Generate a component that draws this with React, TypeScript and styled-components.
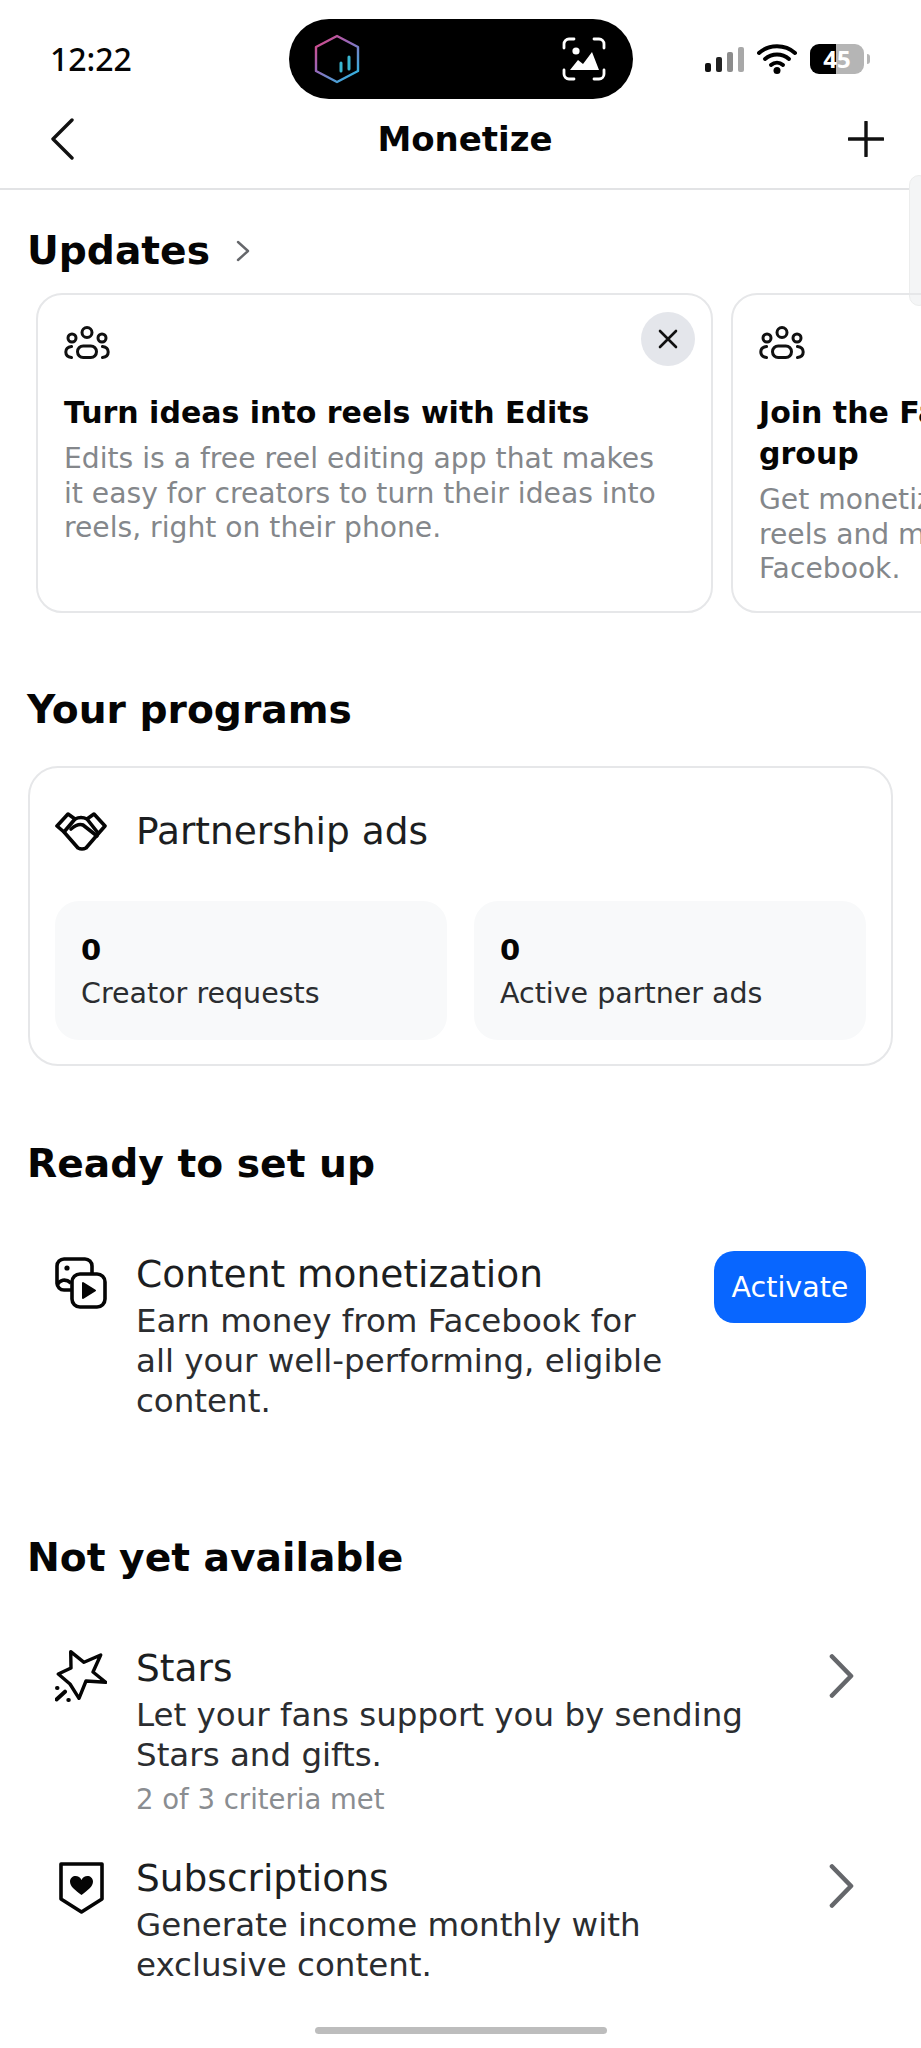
import React from "react";
import styled, { createGlobalStyle } from "styled-components";

const Global = createGlobalStyle`
  html, body { margin: 0; padding: 0; background: #fff; }
  * { box-sizing: border-box; }
`;

const Page = styled.div`
  position: relative;
  width: 921px;
  height: 2048px;
  overflow: hidden;
  background: #fff;
  color: #050505;
  font-family: "DejaVu Sans", "Noto Sans", sans-serif;
`;

const StatusBar = styled.div`
  height: 104px;
  padding: 19px 50px 0 50px;
  display: flex;
  align-items: flex-start;
  justify-content: space-between;
`;

const Time = styled.div`
  width: 239px;
  height: 80px;
  line-height: 80px;
  font-family: "Noto Sans", sans-serif;
  font-size: 32px;
  font-weight: 500;
`;

const Island = styled.div`
  width: 344px;
  height: 80px;
  border-radius: 40px;
  background: #000;
  padding: 0 27px 0 25px;
  display: flex;
  align-items: center;
  justify-content: space-between;
`;

const StatusIcons = styled.div`
  flex: 1;
  height: 80px;
  margin-right: -21px;
  padding-left: 72px;
  display: flex;
  align-items: center;
  gap: 13px;
`;

const Battery = styled.div`
  position: relative;
  width: 54px;
  height: 30px;
  border-radius: 9px;
  background: linear-gradient(90deg, #000 0 26px, #b5b5b5 26px);
  color: #fff;
  font-family: "Noto Sans", sans-serif;
  font-size: 24px;
  font-weight: 700;
  line-height: 30px;
  text-align: center;
  &::after {
    content: "";
    position: absolute;
    right: -6px;
    top: 10px;
    width: 3px;
    height: 10px;
    border-radius: 0 3px 3px 0;
    background: #b5b5b5;
  }
`;

const Nav = styled.div`
  height: 86px;
  padding: 0 37px 14px 50px;
  display: flex;
  align-items: center;
  justify-content: space-between;
  border-bottom: 2px solid #e2e3e5;
`;

const NavTitle = styled.div`
  margin-left: 8px;
  font-size: 34px;
  font-weight: 700;
  line-height: 50px;
`;

const SideSheetHint = styled.div`
  position: absolute;
  top: 175px;
  right: -8px;
  width: 20px;
  height: 131px;
  border-radius: 10px;
  background: #f4f5f6;
  border: 1px solid #eceded;
`;

const SectionHead = styled.div<{ $top: number }>`
  margin-top: ${(p) => p.$top}px;
  padding-left: 27px;
  display: flex;
  align-items: center;
  gap: 26px;
  height: 50px;
`;

const Heading = styled.h2`
  margin: 0;
  font-size: 39.200px;
  font-weight: 700;
  line-height: 50px;
`;

const Strip = styled.div`
  margin-top: 17px;
  padding-left: 36px;
  display: flex;
  gap: 18px;
  overflow: hidden;
`;

const UpdateCard = styled.div`
  position: relative;
  flex: 0 0 677px;
  height: 320px;
  padding: 31px 26px 0 26px;
  border: 2px solid #e6e7e9;
  border-radius: 26px;
`;

const CloseButton = styled.div`
  position: absolute;
  top: 17px;
  right: 16px;
  width: 54px;
  height: 54px;
  border-radius: 50%;
  background: #e4e6eb;
  display: flex;
  align-items: center;
  justify-content: center;
`;

const UpdateTitle = styled.div`
  margin-top: 33px;
  font-size: 30px;
  font-weight: 700;
  line-height: 41px;
  white-space: nowrap;
`;

const UpdateDesc = styled.div`
  margin-top: 9px;
  font-size: 28.200px;
  line-height: 34.500px;
  color: #84878b;
  white-space: nowrap;
`;

const ProgramCard = styled.div`
  margin: 31px 28px 0 28px;
  height: 300px;
  padding: 40px 25px 0 25px;
  border: 2px solid #e6e7e9;
  border-radius: 30px;
`;

const ProgramHead = styled.div`
  display: flex;
  align-items: center;
  gap: 29px;
  height: 46px;
`;

const ProgramName = styled.div`
  font-size: 37.500px;
  line-height: 46px;
  color: #1c1e21;
`;

const Stats = styled.div`
  margin-top: 47px;
  display: grid;
  grid-template-columns: 392px 392px;
  gap: 27px;
`;

const Stat = styled.div`
  height: 139px;
  padding: 29px 26px 0 26px;
  border-radius: 24px;
  background: #f8f9fa;
`;

const StatValue = styled.div`
  font-size: 29px;
  font-weight: 700;
  line-height: 40px;
`;

const StatLabel = styled.div`
  margin-top: 4px;
  font-size: 28.500px;
  line-height: 40px;
  color: #2b2d30;
`;

const Row = styled.div<{ $top: number }>`
  margin-top: ${(p) => p.$top}px;
  padding: 0 55px 0 55px;
  display: flex;
  align-items: flex-start;
`;

const IconCell = styled.div<{ $pad: number }>`
  flex: 0 0 81px;
  padding-top: ${(p) => p.$pad}px;
`;

const RowBody = styled.div`
  flex: 1;
`;

const RowTitle = styled.div`
  font-size: 37.500px;
  line-height: 46px;
  color: #1c1e21;
`;

const RowDesc = styled.div`
  margin-top: 4px;
  font-size: 32.500px;
  line-height: 40px;
  color: #2b2d30;
  white-space: nowrap;
`;

const RowNote = styled.div`
  margin-top: 5px;
  font-size: 27.500px;
  line-height: 38px;
  color: #8a8d91;
`;

const ActivateButton = styled.div`
  width: 152px;
  height: 72px;
  border-radius: 20px;
  background: #0866ff;
  color: #fff;
  font-size: 28.500px;
  display: flex;
  align-items: center;
  justify-content: center;
`;

const RowChevron = styled.div`
  padding: 9px 12px 0 0;
`;

const HomeIndicator = styled.div`
  position: absolute;
  left: 315px;
  top: 2027px;
  width: 292px;
  height: 7px;
  border-radius: 4px;
  background: #bdbdbd;
`;

const IconSvg = styled.svg<{ $indent?: number }>`
  display: block;
  margin-left: ${(p) => p.$indent ?? 0}px;
`;

const People = () => (
  <IconSvg width="46" height="33" viewBox="0 0 46 33" fill="none" stroke="#111" strokeWidth="3" strokeLinecap="round">
    <circle cx="23" cy="6.500" r="5" />
    <circle cx="8" cy="12" r="4" />
    <circle cx="38" cy="12" r="4" />
    <rect x="13.500" y="20" width="19" height="11.500" rx="5.700" />
    <path d="M7.500 20.500C3.500 21 1.800 23.500 1.800 26C1.800 28.500 3.500 31 7.500 31.500M38.500 20.500C42.500 21 44.200 23.500 44.200 26C44.200 28.500 42.500 31 38.500 31.500" />
  </IconSvg>
);

const Handshake = () => (
  <IconSvg width="52" height="40" viewBox="0 0 52 40" fill="none" stroke="#050505" strokeWidth="3.600" strokeLinejoin="round" strokeLinecap="round">
    <path d="M2 15L13 3L20 8Q26 5 32 8L39 3L50 15L43 23L31 37Q27 39 23 37L9 21Z" />
    <path d="M9 21L20 8M32 8L43 22" />
    <path d="M16 18Q23 12 28 14L42 25" />
  </IconSvg>
);

const MediaPlay = () => (
  <IconSvg width="52" height="52" viewBox="0 0 52 52" fill="none" stroke="#050505" strokeWidth="3.600" strokeLinejoin="round">
    <path d="M16 33H9a7 7 0 0 1-7-7V9a7 7 0 0 1 7-7h21a7 7 0 0 1 7 7v7" />
    <circle cx="12" cy="11" r="2.600" fill="#050505" stroke="none" />
    <path d="M2 28c3-5 8-7 14-2" />
    <rect x="17" y="17" width="33" height="33" rx="8" />
    <path d="M28 26v15l12-7.500z" fill="#050505" stroke="#050505" strokeWidth="2" />
  </IconSvg>
);

const StarIcon = () => (
  <IconSvg width="52" height="54" viewBox="0 0 52 54" fill="none" stroke="#050505" strokeWidth="3.400" strokeLinejoin="round" strokeLinecap="round">
    <path d="M15.700 2.700L29 13.300L45.700 6L38 23L50.700 33.300L31 32L24 49.300L15 35L3.300 25L16 19Z" />
    <path d="M2 39L2.500 39M10 42.700L1.500 50.500M13.300 51L13.800 51" strokeWidth="4" />
  </IconSvg>
);

const Shield = () => (
  <IconSvg $indent={4} width="45" height="52" viewBox="0 0 45 52" fill="none" stroke="#050505" strokeWidth="3.600" strokeLinejoin="round">
    <path d="M2 2H43V37L22.500 50L2 37Z" />
    <path d="M22.500 33C16 28 11 24.500 11 19.500C11 16 14 14 16.500 14C19 14 21.500 15.500 22.500 18C23.500 15.500 26 14 28.500 14C31 14 34 16 34 19.500C34 24.500 29 28 22.500 33Z" fill="#050505" stroke="none" />
  </IconSvg>
);

const Chevron = () => (
  <IconSvg width="25" height="44" viewBox="0 0 25 44" fill="none" stroke="#65676b" strokeWidth="4.600" strokeLinecap="round" strokeLinejoin="round">
    <path d="M3 2.500L22 22L3 41.500" />
  </IconSvg>
);

const App: React.FC = () => (
  <Page>
    <Global />
    <StatusBar>
      <Time>12:22</Time>
      <Island>
        <svg width="46" height="50" viewBox="0 0 46 50" fill="none">
          <defs>
            <linearGradient id="hex" x1="0" y1="0" x2="0.8" y2="1">
              <stop offset="0" stopColor="#e0457f" />
              <stop offset="0.45" stopColor="#9a66b8" />
              <stop offset="1" stopColor="#2fb4e0" />
            </linearGradient>
          </defs>
          <path d="M23 2L44 13V37L23 48L2 37V13Z" stroke="url(#hex)" strokeWidth="2.400" strokeLinejoin="round" />
          <path d="M27 37V29M35 35V23" stroke="#39b6cf" strokeWidth="3" strokeLinecap="round" />
        </svg>
        <svg width="44" height="44" viewBox="0 0 44 44" fill="none" stroke="#fff" strokeWidth="2.800" strokeLinecap="round">
          <path d="M2 11V7a5 5 0 0 1 5-5h5M32 2h5a5 5 0 0 1 5 5v4M42 33v4a5 5 0 0 1-5 5h-5M12 42H7a5 5 0 0 1-5-5v-4" />
          <circle cx="14" cy="14" r="3.600" fill="#fff" stroke="none" />
          <path d="M8 33L16 23L21 27L30 15L37 33Z" fill="#fff" stroke="none" />
        </svg>
      </Island>
      <StatusIcons>
        <svg width="39" height="25" viewBox="0 0 39 25">
          <rect x="0" y="16" width="6" height="9" rx="2" fill="#111" />
          <rect x="11" y="10" width="6" height="15" rx="2" fill="#222" />
          <rect x="22" y="5" width="6" height="20" rx="2" fill="#8c8c8c" />
          <rect x="33" y="0" width="6" height="25" rx="2" fill="#a8a8a8" />
        </svg>
        <svg width="40" height="30" viewBox="0 0 40 30" fill="none" stroke="#000" strokeLinecap="round">
          <path d="M2 9C12 0 28 0 38 9" strokeWidth="4" />
          <path d="M8 15C15 9 25 9 32 15" strokeWidth="4" />
          <path d="M14 21C17.500 18 22.500 18 26 21" strokeWidth="4" />
          <circle cx="20" cy="26.500" r="3.500" fill="#000" stroke="none" />
        </svg>
        <Battery>45</Battery>
      </StatusIcons>
    </StatusBar>

    <Nav>
      <svg width="24" height="42" viewBox="0 0 24 42" fill="none" stroke="#111" strokeWidth="3.400" strokeLinecap="round" strokeLinejoin="round">
        <path d="M22 2L3 21L22 40" />
      </svg>
      <NavTitle>Monetize</NavTitle>
      <svg width="36" height="36" viewBox="0 0 36 36" fill="none" stroke="#111" strokeWidth="3.400" strokeLinecap="round">
        <path d="M18 1V35M1 18H35" />
      </svg>
    </Nav>

    <SideSheetHint />

    <SectionHead $top={36}>
      <Heading>Updates</Heading>
      <svg width="14" height="22" viewBox="0 0 14 22" fill="none" stroke="#65676b" strokeWidth="2.400" strokeLinecap="round" strokeLinejoin="round">
        <path d="M2 2L12 11L2 20" />
      </svg>
    </SectionHead>

    <Strip>
      <UpdateCard>
        <People />
        <CloseButton>
          <svg width="20" height="20" viewBox="0 0 20 20" fill="none" stroke="#111" strokeWidth="2.600" strokeLinecap="round">
            <path d="M2 2L18 18M18 2L2 18" />
          </svg>
        </CloseButton>
        <UpdateTitle>Turn ideas into reels with Edits</UpdateTitle>
        <UpdateDesc>
          Edits is a free reel editing app that makes
          <br />
          it easy for creators to turn their ideas into
          <br />
          reels, right on their phone.
        </UpdateDesc>
      </UpdateCard>
      <UpdateCard>
        <People />
        <UpdateTitle>
          Join the Facebook Creators
          <br />
          group
        </UpdateTitle>
        <UpdateDesc>
          Get monetization updates and tips for
          <br />
          reels and more from other creators on
          <br />
          Facebook.
        </UpdateDesc>
      </UpdateCard>
    </Strip>

    <SectionHead $top={72}>
      <Heading>Your programs</Heading>
    </SectionHead>

    <ProgramCard>
      <ProgramHead>
        <Handshake />
        <ProgramName>Partnership ads</ProgramName>
      </ProgramHead>
      <Stats>
        <Stat>
          <StatValue>0</StatValue>
          <StatLabel>Creator requests</StatLabel>
        </Stat>
        <Stat>
          <StatValue>0</StatValue>
          <StatLabel>Active partner ads</StatLabel>
        </Stat>
      </Stats>
    </ProgramCard>

    <SectionHead $top={73}>
      <Heading>Ready to set up</Heading>
    </SectionHead>

    <Row $top={62}>
      <IconCell $pad={6}>
        <MediaPlay />
      </IconCell>
      <RowBody>
        <RowTitle>Content monetization</RowTitle>
        <RowDesc>
          Earn money from Facebook for
          <br />
          all your well-performing, eligible
          <br />
          content.
        </RowDesc>
      </RowBody>
      <ActivateButton>Activate</ActivateButton>
    </Row>

    <SectionHead $top={112}>
      <Heading>Not yet available</Heading>
    </SectionHead>

    <Row $top={62}>
      <IconCell $pad={4}>
        <StarIcon />
      </IconCell>
      <RowBody>
        <RowTitle>Stars</RowTitle>
        <RowDesc>
          Let your fans support you by sending
          <br />
          Stars and gifts.
        </RowDesc>
        <RowNote>2 of 3 criteria met</RowNote>
      </RowBody>
      <RowChevron>
        <Chevron />
      </RowChevron>
    </Row>

    <Row $top={37}>
      <IconCell $pad={7}>
        <Shield />
      </IconCell>
      <RowBody>
        <RowTitle>Subscriptions</RowTitle>
        <RowDesc>
          Generate income monthly with
          <br />
          exclusive content.
        </RowDesc>
      </RowBody>
      <RowChevron>
        <Chevron />
      </RowChevron>
    </Row>

    <HomeIndicator />
  </Page>
);

export default App;
